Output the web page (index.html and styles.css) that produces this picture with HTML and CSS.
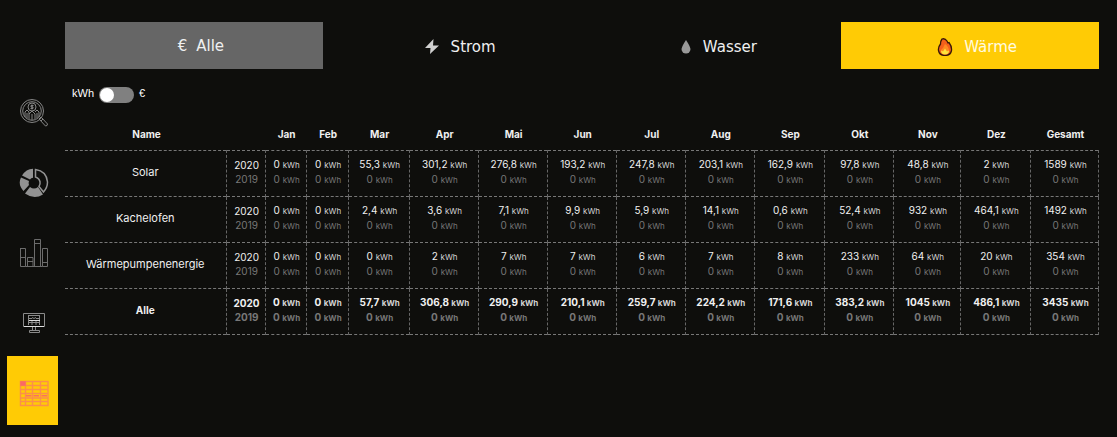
FILE: index.html
```html
<!DOCTYPE html>
<html lang="de">
<head>
<meta charset="utf-8">
<meta name="viewport" content="width=device-width, initial-scale=1">
<title>Energie</title>
<link rel="stylesheet" href="styles.css">
</head>
<body>
<div class="app">
  <nav class="side" aria-label="Ansichten">
    <button class="side-item" type="button" aria-label="Analyse">
      <svg width="30" height="30" viewBox="0 0 30 30" fill="none" stroke="#858585" stroke-width="1">
        <circle cx="13" cy="13" r="11.5"/><circle cx="13" cy="13" r="9.3"/>
        <circle cx="13" cy="9" r="4"/><path d="M14.500 7.500h-2.500v1.500h2v1.500h-2.500M13 6.500v5"/>
        <path d="M6 19v-5l2-2 2 2v7M10 16l3-3 3 3v5M16 14l2-2 2 2v5M8 15v5M13 16v6M18 15v5"/>
        <path d="M20 21l2-2 6.500 7q0 2-2 2zM22 23l2-2"/>
      </svg>
    </button>
    <button class="side-item" type="button" aria-label="Verteilung">
      <svg width="30" height="30" viewBox="0 0 30 30">
        <g fill="#929292"><path d="M14 .7v9Q12 10 11 11.500L3 7.500Q7 1 14 .7z"/><path d="M2 9.500l8 3.500q-.7 2 0 4L4.500 23Q-1.500 16.500 2 9.500z"/><path d="M11 19q4 3 8 0l5 7.500q-9 5.500-18-1z"/></g>
        <path d="M16.500 1.500q11 1.500 12 12.500 0 5.500-4 10l-4.500-5.500q1.500-2 1-4.500-.5-3.500-4.500-5z" fill="none" stroke="#929292" stroke-width="1.500"/>
      </svg>
    </button>
    <button class="side-item" type="button" aria-label="Balkendiagramm">
      <svg width="30" height="30" viewBox="0 0 30 30" fill="none" stroke="#6c6c6c">
        <path d="M1 10.500h5.500v18H1.500v-18M1 19.500h5.500M8.500 19.500H14v9H8.500zM8.500 23.500H14M15.500 1.500h6v27h-6zM15.500 5.500h6M23.500 10.500h5v18h-5zM23.500 24.500h5M6.500 28.500h17"/>
      </svg>
    </button>
    <button class="side-item" type="button" aria-label="Monitor">
      <svg width="30" height="30" viewBox="0 0 30 30" fill="none" stroke="#8a8a8a">
        <path d="M4.500 5.500h21v13h-21zM9.500 7v10M20.500 7v10M10 7.500h10M10 10.500h3M17 10.500h3M13 9.500l2 1 2-1M10 14.500h10M13 13v4M17 13v4M13.500 19v4M16.500 19v4M10.500 22.500h10v2h-10z"/>
        <path d="M10 12.500h11M5 18.500h20" stroke="#ddd"/>
      </svg>
    </button>
    <button class="side-item side-item-active" type="button" aria-label="Tabelle" aria-current="page">
      <svg width="30" height="30" viewBox="0 0 30 30" fill="none" stroke="#fb8f4b" stroke-width="1.400">
        <path d="M1.500 3.500h27.500v24h-27.500zM1 7.500h28M1 11.500h28M1 15.500h28M1 20h28M1 23.500h28M6.500 3v25M13.500 3v25M21.500 3v25"/>
        <path d="M7 17.800h5.500M14.500 17.800h5.500M22.500 17.800h5.500" stroke="#fb7060"/><path d="M2 4h4v3H2z" fill="#fb6964" stroke="#fb6964"/>
      </svg>
    </button>
  </nav>
  <main class="main">
    <div class="tabs">
      <button class="tab tab-all" type="button"><span>€</span><span>Alle</span></button>
      <button class="tab" type="button">
        <svg width="16" height="16" viewBox="0 0 16 16"><path d="M9.500 0L1 9h5.500L6 15l9-8.500H9z" fill="#d0d0d0"/></svg><span>Strom</span></button>
      <button class="tab" type="button">
        <svg width="12" height="16" viewBox="0 0 12 16"><path d="M6 1q4 6 4.500 9a4.500 4.500 0 0 1-9 0Q2 7 6 1z" fill="#999"/></svg><span>Wasser</span></button>
      <button class="tab tab-heat" type="button" aria-pressed="true">
        <svg width="16" height="18" viewBox="0 0 16 18"><path d="M5 1q3-1 5 2l1 2 1-.5q3 4 2.500 8-1 5-6.500 5t-6.500-5Q1 9 3.500 6q0-3 1.500-5z" fill="#f4601c" stroke="#3b1808" stroke-width="1.300"/><path d="M8 6q4 3 4 7-1 3-4 3t-4-3q0-2 2-3z" fill="#ff8b20"/><path d="M8 16.500q-4 0-4-4l2 1 2-3 2 3 2-1q0 4-4 4z" fill="#ffe33c"/></svg><span>Wärme</span></button>
    </div>
    <label class="unit"><span>kWh</span><input class="switch" type="checkbox" role="switch" aria-label="Einheit kWh oder Euro"><span>€</span></label>
    <table class="data">
      <colgroup><col class="c-name"><col class="c-year"><col class="c-jan"><col class="c-feb"><col class="c-mar"><col span="5" class="c-month"><col class="c-wide"><col class="c-month"><col class="c-nov"><col class="c-wide"><col class="c-sum"></colgroup>
      <thead><tr><th>Name</th><td></td><th>Jan</th><th>Feb</th><th>Mar</th><th>Apr</th><th>Mai</th><th>Jun</th><th>Jul</th><th>Aug</th><th>Sep</th><th>Okt</th><th>Nov</th><th>Dez</th><th>Gesamt</th></tr></thead>
      <tbody id="rows"></tbody>
    </table>
  </main>
</div>
<script src="table.js"></script>
</body>
</html>
```
FILE: table.js
```js
const rows = [
  ["Solar", "0", "0", "55,3", "301,2", "276,8", "193,2", "247,8", "203,1", "162,9", "97,8", "48,8", "2", "1589"],
  ["Kachelofen", "0", "0", "2,4", "3,6", "7,1", "9,9", "5,9", "14,1", "0,6", "52,4", "932", "464,1", "1492"],
  ["Wärmepumpenenergie", "0", "0", "0", "2", "7", "7", "6", "7", "8", "233", "64", "20", "354"],
  ["Alle", "0", "0", "57,7", "306,8", "290,9", "210,1", "259,7", "224,2", "171,6", "383,2", "1045", "486,1", "3435"]
];
const cell = v => `<td><div>${v} <small>kWh</small></div><div class="prev">0 <small>kWh</small></div></td>`;
document.getElementById("rows").innerHTML = rows.map(([name, ...values]) =>
  `<tr class="${name === "Alle" ? "total" : ""}"><th scope="row">${name}</th>` +
  `<td class="year"><div>2020</div><div class="prev">2019</div></td>${values.map(cell).join("")}</tr>`
).join("");
```
FILE: styles.css
```css
* { box-sizing: border-box; }
body {
  margin: 0;
  background: #0e0e0c;
  color: #f0f0f0;
  font-family: Inter, "DejaVu Sans", sans-serif;
}
button { border: 0; padding: 0; background: none; color: inherit; font: inherit; cursor: pointer; }
.app { display: grid; grid-template-columns: 51px minmax(0, 1fr); gap: 7px; padding: 22px 18px 12px 7px; }
.side { display: flex; flex-direction: column; gap: 1px; padding-top: 54px; }
.side-item { height: 69px; padding: 4px 0 0 3px; display: flex; align-items: center; justify-content: center; }
.side-item-active { background: #ffcb05; }
.tabs { display: grid; grid-template-columns: repeat(4, 1fr); gap: 1px; }
.tab {
  height: 47px;
  display: flex;
  align-items: center;
  justify-content: center;
  gap: 11px;
  padding: 2px 0 0 14px;
  font-family: "DejaVu Sans", sans-serif;
  font-size: 15px;
}
.tab-all { background: #666; gap: 9px; padding-top: 0; }
.tab-heat { background: #ffcb05; color: #fffbe0; }
.unit {
  display: inline-flex;
  align-items: center;
  gap: 5px;
  margin: 17px 0 0 7px;
  height: 18px;
  font: 11px/16px "Liberation Sans", sans-serif;
  color: #fff;
}
.unit span { padding-bottom: 4px; }
.switch {
  appearance: none;
  width: 35px;
  height: 16px;
  margin: 0;
  padding: 1px;
  border-radius: 8px;
  background: #808080;
}
.switch::before { content: ""; display: block; width: 14px; height: 14px; border-radius: 50%; background: #fff; }
.switch:checked::before { margin-left: auto; }
.data {
  width: 100%;
  margin-top: 14px;
  table-layout: fixed;
  border-collapse: collapse;
  text-align: center;
  font-size: 10px;
  line-height: 14px;
}
.c-name { width: 161px; }
.c-year { width: 39px; }
.c-jan { width: 41px; }
.c-feb { width: 42px; }
.c-mar { width: 61px; }
.c-month { width: 69px; }
.c-wide { width: 70px; }
.c-nov { width: 67px; }
.c-sum { width: 68px; }
.data th, .data td { padding: 0; white-space: nowrap; }
.data thead th { height: 32px; padding: 1px 0 0 2px; font-weight: 700; }
.data thead tr { border-bottom: 1px dashed #777; }
.data tbody tr { height: 46px; border-bottom: 1px dashed #777; }
.data tbody th { padding-bottom: 2px; font-size: 11px; font-weight: 400; border-right: 1px dashed #666; }
.data tbody td { border-right: 1px dashed #666; padding: 0 0 2px 2px; }
.data small { font-size: 8px; color: #d4d4d4; }
.data .prev, .data .prev small { color: #777; }
.data tbody .total th { font-size: 10px; font-weight: 700; }
.data .total td { font-weight: 700; }
```
